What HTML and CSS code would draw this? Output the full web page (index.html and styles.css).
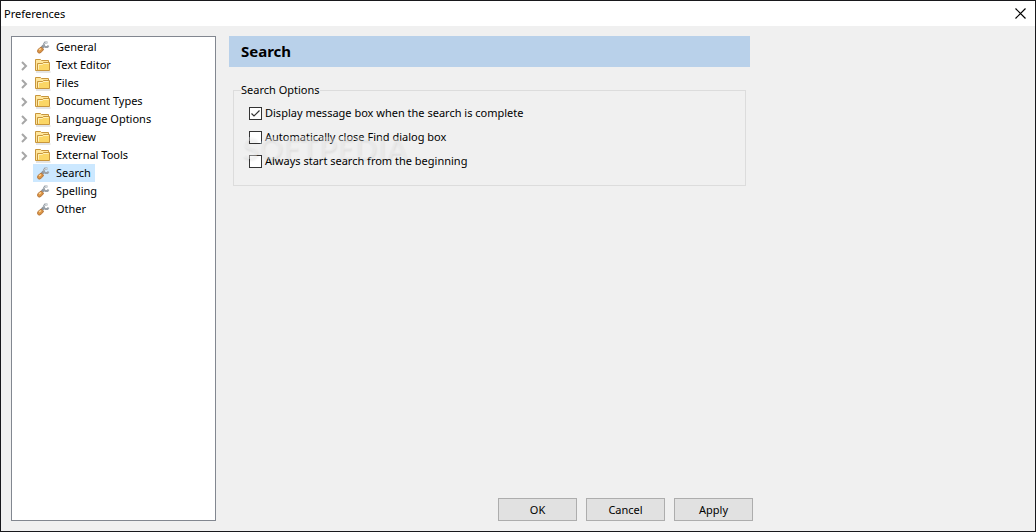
FILE: index.html
```
<!DOCTYPE html>
<html lang="en">
  <head>
    <meta charset="utf-8">
    <title>Preferences</title>
    <link rel="stylesheet" href="styles.css">
  </head>
  <body>
    <!-- shared icons -->
    <svg class="sprite" aria-hidden="true">
      <symbol id="folder" viewBox="0 0 16 16">
        <path d="M1 14.5h14.5v1H1z" fill="#c9c9c9" />
        <path d="M.5 13.500V2.500h5l1 1h7v10z" fill="#ffe69b" stroke="#c8963c" />
        <path d="M2.500 13.500V6.500h5l1-1h6v8z" fill="#fbd665" stroke="#c8963c" />
        <path d="M3.500 12.500v-5h4l1-1h5" fill="none" stroke="#fff0b8" />
      </symbol>
      <symbol id="tool" viewBox="0 0 16 16">
        <path d="M7 8.500 9.500 6" stroke="#8b939b" stroke-width="3" />
        <path d="M12.500 3.500h-2.500l-1 1.500v2l1.500 1h2l1-1.500" fill="none" stroke="#9aa1a8" stroke-width="2" />
        <path d="M9 5.500 10.500 3.500h2" fill="none" stroke="#d5dade" />
        <path d="m3 10.500 3-2.500 2.500 2-1 2-2.500 2H3.500L2.500 12.500z" fill="#dc9444" stroke="#b5763b" />
        <path d="m4 11 2-1.500" stroke="#ffd794" stroke-width="1.500" />
      </symbol>
      <symbol id="chevron" viewBox="0 0 8 10">
        <path d="m2 1 4 4-4 4" fill="none" stroke="#a6a6a6" stroke-width="2" />
      </symbol>
    </svg>

    <div class="window">
      <header class="titlebar">
        <span>Preferences</span>
        <button class="close" aria-label="Close">
          <svg width="11" height="11" viewBox="0 0 11 11"><path d="m.5.5 10 10m0-10-10 10" stroke="#000" stroke-width="1.200" /></svg>
        </button>
      </header>

      <div class="content">
        <nav class="tree" aria-label="Categories">
          <ul>
            <li><a class="item" href="#general"><svg class="icon"><use href="#tool" /></svg>General</a></li>
            <li><button class="expand" aria-label="Expand Text Editor"><svg><use href="#chevron" /></svg></button><a class="item" href="#editor"><svg class="icon"><use href="#folder" /></svg>Text Editor</a></li>
            <li><button class="expand" aria-label="Expand Files"><svg><use href="#chevron" /></svg></button><a class="item" href="#files"><svg class="icon"><use href="#folder" /></svg>Files</a></li>
            <li><button class="expand" aria-label="Expand Document Types"><svg><use href="#chevron" /></svg></button><a class="item" href="#types"><svg class="icon"><use href="#folder" /></svg>Document Types</a></li>
            <li><button class="expand" aria-label="Expand Language Options"><svg><use href="#chevron" /></svg></button><a class="item" href="#language"><svg class="icon"><use href="#folder" /></svg>Language Options</a></li>
            <li><button class="expand" aria-label="Expand Preview"><svg><use href="#chevron" /></svg></button><a class="item" href="#preview"><svg class="icon"><use href="#folder" /></svg>Preview</a></li>
            <li><button class="expand" aria-label="Expand External Tools"><svg><use href="#chevron" /></svg></button><a class="item" href="#external"><svg class="icon"><use href="#folder" /></svg>External Tools</a></li>
            <li><a class="item selected" href="#search" aria-current="page"><svg class="icon"><use href="#tool" /></svg>Search</a></li>
            <li><a class="item" href="#spelling"><svg class="icon"><use href="#tool" /></svg>Spelling</a></li>
            <li><a class="item" href="#other"><svg class="icon"><use href="#tool" /></svg>Other</a></li>
          </ul>
        </nav>

        <main class="page" id="search">
          <h1>Search</h1>
          <fieldset class="options">
            <legend>Search Options</legend>
            <label><input type="checkbox" checked>Display message box when the search is complete</label>
            <label><input type="checkbox">Automatically close Find dialog box</label>
            <label><input type="checkbox">Always start search from the beginning</label>
            <span class="watermark" aria-hidden="true">SOFTPEDIA</span>
          </fieldset>
          <div class="buttons">
            <button>OK</button>
            <button>Cancel</button>
            <button>Apply</button>
          </div>
        </main>
      </div>
    </div>
  </body>
</html>
```
FILE: styles.css
```
* {
  box-sizing: border-box;
}

body {
  margin: 0;
  font-family: "Noto Sans", "Open Sans", sans-serif;
  font-size: 11px;
  line-height: 18px;
  color: #000;
}

button {
  font: inherit;
  color: inherit;
}

.sprite {
  position: absolute;
  width: 0;
  height: 0;
}

.window {
  display: flex;
  flex-direction: column;
  min-height: 100vh;
  border: 1px solid #18181c;
  background: #f0f0f0;
}

.titlebar {
  display: flex;
  align-items: center;
  justify-content: space-between;
  height: 25px;
  padding-left: 3px;
  background: #fff;
}

.close {
  display: flex;
  align-items: center;
  justify-content: center;
  width: 30px;
  height: 25px;
  padding: 0;
  border: none;
  background: none;
}

.content {
  display: flex;
  flex: 1;
  gap: 13px;
  padding: 10px;
}

/* category tree */
.tree {
  flex: 0 0 205px;
  padding: 1px 0;
  border: 1px solid #828790;
  background: #fff;
}

.tree ul {
  margin: 0;
  padding: 0;
  list-style: none;
}

.tree li {
  display: flex;
  justify-content: flex-start;
  height: 18px;
  padding-left: 21px;
}

.expand {
  width: 16px;
  height: 18px;
  margin-left: -16px;
  padding: 2px 0 0;
  border: none;
  background: none;
}

.expand svg {
  display: block;
  width: 8px;
  height: 10px;
  margin-left: 3px;
}

.item {
  display: flex;
  align-items: center;
  gap: 5px;
  padding: 0 4px 0 2px;
  color: inherit;
  text-decoration: none;
}

.item.selected {
  background: #cce8ff;
}

.icon {
  width: 16px;
  height: 16px;
}

/* settings page */
.page {
  display: flex;
  flex: 0 1 524px;
  flex-direction: column;
}

h1 {
  margin: 0 3px 16px 0;
  padding: 0 12px;
  font-size: 15px;
  line-height: 31px;
  background: #b9d1ea;
}

.options {
  position: relative;
  margin: 0 7px 0 4px;
  padding: 4px 15px 12px;
  border: 1px solid #dcdcdc;
}

.options legend {
  margin-left: -8px;
  padding: 0;
  line-height: 14px;
}

.options label {
  display: flex;
  align-items: center;
  gap: 3px;
  height: 24px;
}

.options input {
  appearance: none;
  width: 13px;
  height: 13px;
  margin: 0;
  border: 1px solid #333;
  background: #fff;
}

.options input:checked {
  background: #fff url("data:image/svg+xml,%3Csvg xmlns='http://www.w3.org/2000/svg' viewBox='0 0 11 11'%3E%3Cpath d='m1.500 5.500 2.500 2.500 5.500-5.500' fill='none' stroke='%23333' stroke-width='1.200'/%3E%3C/svg%3E");
}

.watermark {
  position: absolute;
  left: 8px;
  top: 34px;
  font-family: Lato, "Noto Sans", sans-serif;
  font-size: 30px;
  font-weight: 900;
  line-height: 32px;
  color: rgba(245, 245, 245, 0.4);
  text-shadow: 1px 2px 2px rgba(0, 0, 0, 0.06);
  pointer-events: none;
}

.buttons {
  display: flex;
  justify-content: flex-end;
  gap: 9px;
  margin-top: auto;
}

.buttons button {
  width: 79px;
  height: 23px;
  padding: 0;
  border: 1px solid #adadad;
  background: #e1e1e1;
}
```
